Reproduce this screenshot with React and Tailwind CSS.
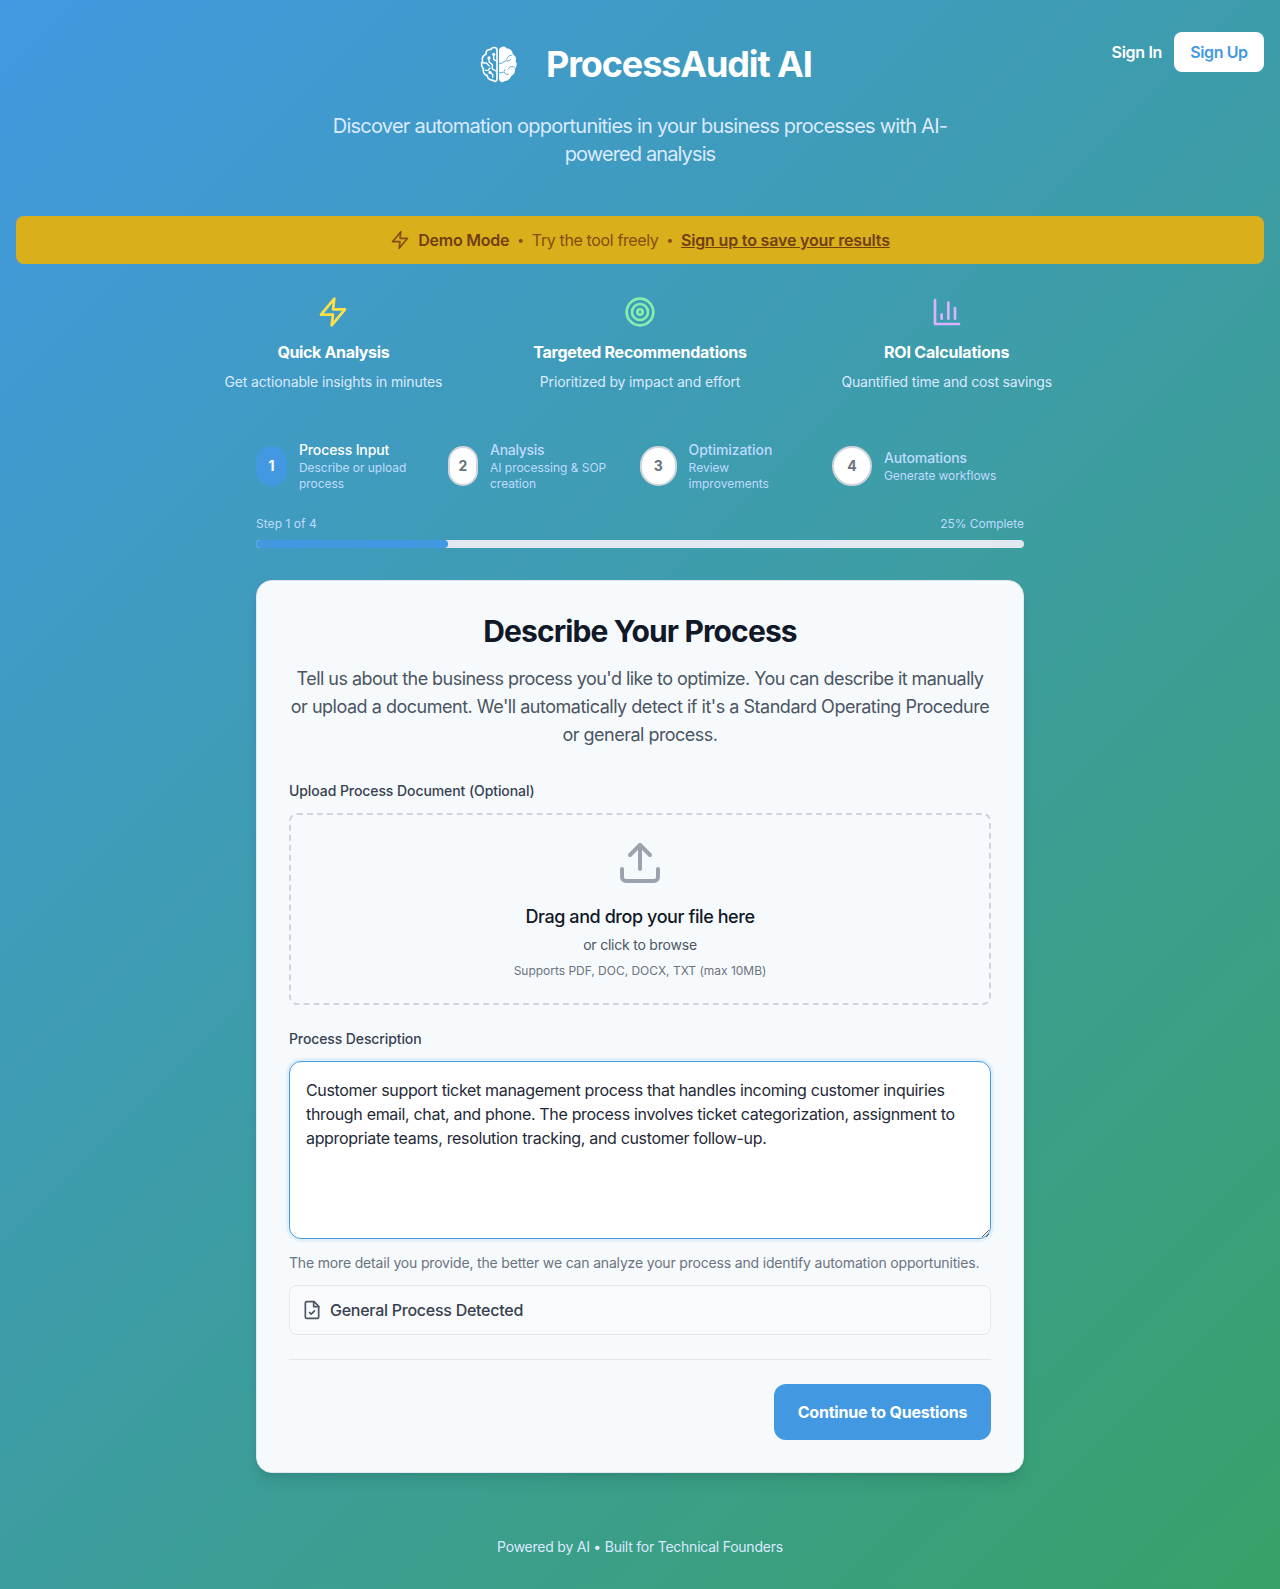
const features = [
  { title: "Quick Analysis", desc: "Get actionable insights in minutes", icon: "zap", color: "text-[#fde047]", ts: "tracking-[-0.35px]", ds: "tracking-[-0.135px]" },
  { title: "Targeted Recommendations", desc: "Prioritized by impact and effort", icon: "target", color: "text-[#86efac]", ts: "tracking-[-0.26px]", ds: "tracking-[-0.135px]" },
  { title: "ROI Calculations", desc: "Quantified time and cost savings", icon: "chart", color: "text-[#d8b4fe]", ts: "tracking-[-0.2px]", ds: "tracking-[-0.175px]" },
];

const steps = [
  { n: 1, label: "Process Input", lines: ["Describe or upload", "process"], w: "w-[31px]", active: true, ls: "tracking-[-0.13px]", ds: "tracking-[-0.04px]" },
  { n: 2, label: "Analysis", lines: ["AI processing & SOP", "creation"], w: "w-[30px]", ls: "tracking-[-0.3px]", ds: "tracking-[-0.02px]" },
  { n: 3, label: "Optimization", lines: ["Review", "improvements"], w: "w-[36.6px]", ls: "tracking-[-0.08px]", ds: "tracking-[0px]" },
  { n: 4, label: "Automations", lines: ["Generate workflows"], w: "w-10", ls: "tracking-[-0.14px]", ds: "tracking-[-0.1px]" },
];

function Icon({ name, className }) {
  const shapes = {
    zap: <polygon points="13 2 3 14 12 14 11 22 21 10 12 10 13 2" />,
    target: (
      <>
        <circle cx="12" cy="12" r="10" />
        <circle cx="12" cy="12" r="6" />
        <circle cx="12" cy="12" r="2" />
      </>
    ),
    chart: (
      <>
        <path d="M3 3v18h18" />
        <path d="M18 17V9" />
        <path d="M13 17V5" />
        <path d="M8 17v-3" />
      </>
    ),
    upload: (
      <>
        <path d="M21 15v4a2 2 0 0 1-2 2H5a2 2 0 0 1-2-2v-4" />
        <polyline points="17 8 12 3 7 8" />
        <line x1="12" x2="12" y1="3" y2="15" />
      </>
    ),
    file: (
      <>
        <path d="M14.5 2H6a2 2 0 0 0-2 2v16a2 2 0 0 0 2 2h12a2 2 0 0 0 2-2V7.5L14.5 2z" />
        <polyline points="14 2 14 8 20 8" />
        <path d="m9 15 2 2 4-4" />
      </>
    ),
  };
  return (
    <svg viewBox="0 0 24 24" fill="none" stroke="currentColor" strokeWidth="2" strokeLinecap="round" strokeLinejoin="round" className={className}>
      {shapes[name]}
    </svg>
  );
}

function BrainLogo() {
  return (
    <svg viewBox="21 6 192 192" className="mr-4 h-16 w-16" fill="none" strokeLinecap="round" strokeLinejoin="round">
      <path
        d="M111 60C111 51 97 50 93 58C83 57 76 64 78 73C69 76 64 85 68 93C63 99 64 111 70 116C68 126 73 134 81 136C83 146 91 152 98 150C104 157 111 154 111 146Z"
        stroke="#fff"
        strokeWidth="5"
      />
      <g stroke="#fff" strokeWidth="4.2">
        <path d="M101 74V88L109 93" />
        <path d="M87 85V96L97 104V117L108 123" />
        <path d="M70 99H79L87 107" />
        <path d="M75 121H84L90 114" />
        <path d="M90 128L98 133V142" />
      </g>
      <g fill="#fff">
        <circle cx="101" cy="73" r="4.8" />
        <circle cx="87" cy="84" r="5" />
        <circle cx="90" cy="127" r="4.8" />
      </g>
      <path
        d="M119 58C121 50 136 48 140 57C150 56 158 64 156 73C165 76 169 85 165 93C171 100 169 112 163 117C165 127 160 135 152 137C150 147 142 152 135 151C129 158 120 156 119 149Z"
        fill="#fff"
        stroke="#fff"
        strokeWidth="3"
      />
      <g stroke="#419bc5" strokeWidth="2.6">
        <path d="M154 76C147 76 142 80 141 87" />
        <path d="M119 101C130 101 134 90 144 92C148 93 150 91 152 88" />
        <path d="M163 112C156 106 147 110 145 117" />
        <path d="M119 128C127 130 134 127 135 119" />
        <path d="M133 127C136 132 140 134 145 133" />
      </g>
    </svg>
  );
}

export default function App() {
  return (
    <div className="relative min-h-[1589px] w-full bg-[linear-gradient(135deg,#4299e1_0%,#38a169_100%)] px-4 py-8 font-[Inter,sans-serif]">
      <div className="absolute top-8 right-4 flex items-center">
        <button className="mr-3 text-base leading-6 font-[560] tracking-[-0.32px] whitespace-nowrap text-white">Sign In</button>
        <button className="h-10 w-[90px] rounded-lg bg-white text-base font-[560] tracking-[-0.4px] whitespace-nowrap text-[#4299e1]">Sign Up</button>
      </div>

      <header className="text-center">
        <div className="flex items-center justify-center">
          <BrainLogo />
          <h1 className="-ml-px w-[267px] text-left text-4xl font-[730] tracking-[-1.13px] whitespace-nowrap text-white">ProcessAudit AI</h1>
        </div>
        <p className="mt-4 text-xl leading-7 whitespace-nowrap text-[#dbeafe]">
          <span className="tracking-[-0.761px]">Discover automation opportunities in your business processes with AI-</span>
          <br />
          <span className="tracking-[-0.88px]">powered analysis</span>
        </p>
      </header>

      <div className="mt-12 flex h-12 items-center justify-center gap-2 rounded-lg bg-[#d9af1b] text-base whitespace-nowrap text-[#854d0e]">
        <Icon name="zap" className="h-5 w-5" />
        <span className="font-[630] tracking-[-0.22px] text-[#713f12]">Demo Mode</span>
        <span className="w-[6.5px] text-center text-[12px]">•</span>
        <span className="tracking-[-0.37px]">Try the tool freely</span>
        <span className="w-[6.5px] text-center text-[12px]">•</span>
        <a className="font-[630] tracking-[-0.17px] text-[#713f12] underline">Sign up to save your results</a>
      </div>

      <section className="mx-auto mt-8 grid max-w-4xl grid-cols-3 gap-6 text-center">
        {features.map((f) => (
          <div key={f.title} className="flex flex-col items-center whitespace-nowrap">
            <Icon name={f.icon} className={`h-8 w-8 ${f.color}`} />
            <h3 className={`mt-3 text-base font-[660] text-white ${f.ts}`}>{f.title}</h3>
            <p className={`mt-2 text-sm text-[#dbeafe] ${f.ds}`}>{f.desc}</p>
          </div>
        ))}
      </section>

      <main className="mx-auto mt-12 max-w-3xl">
        <div className="grid grid-cols-4">
          {steps.map((s) => (
            <div key={s.n} className="flex h-[52px] items-center">
              <div
                className={`flex h-10 shrink-0 items-center justify-center rounded-[20px] border-2 text-sm font-[660] ${s.w} ${
                  s.active ? "border-[#4299e1] bg-[#4299e1] text-white" : "border-[#d1d5db] bg-white text-[#6b7280]"
                }`}
              >
                {s.n}
              </div>
              <div className="ml-3 whitespace-nowrap">
                <div className={`text-sm font-[550] ${s.ls} ${s.active ? "text-white" : "text-[#bfdbfe]"}`}>{s.label}</div>
                {s.lines.map((l) => (
                  <div key={l} className={`text-xs text-[#bfdbfe] ${s.ds}`}>{l}</div>
                ))}
              </div>
            </div>
          ))}
        </div>

        <div className="mt-6 flex justify-between text-xs text-[#bfdbfe]">
          <span className="tracking-[0.05px]">Step 1 of 4</span>
          <span className="tracking-[-0.05px]">25% Complete</span>
        </div>
        <div className="mt-2 h-2 overflow-hidden rounded bg-[#e2e8f0]">
          <div className="h-2 w-1/4 rounded bg-[#4299e1]" />
        </div>

        <div className="mt-8 rounded-2xl border border-[#e2e8f0] bg-[#f7fafc] p-8 shadow-[0_10px_15px_-3px_rgba(0,0,0,0.1),0_4px_6px_-2px_rgba(0,0,0,0.05)]">
          <div className="text-center whitespace-nowrap">
            <h2 className="text-3xl leading-9 font-[720] tracking-[-0.88px] text-[#111827]">Describe Your Process</h2>
            <p className="mt-4 text-lg leading-7 text-[#4b5563]">
              <span className="tracking-[-0.54px]">Tell us about the business process you'd like to optimize. You can describe it manually</span>
              <br />
              <span className="tracking-[-0.484px]">or upload a document. We'll automatically detect if it's a Standard Operating Procedure</span>
              <br />
              <span className="tracking-[-0.52px]">or general process.</span>
            </p>
          </div>

          <div className="mt-8 text-sm font-medium tracking-[-0.08px] text-[#374151]">Upload Process Document (Optional)</div>
          <div className="mt-3 flex flex-col items-center rounded-lg border-2 border-dashed border-[#d1d5db] p-6">
            <Icon name="upload" className="h-12 w-12 text-[#9ca3af]" />
            <div className="mt-4 text-lg leading-7 font-medium tracking-[-0.42px] text-[#111827]">Drag and drop your file here</div>
            <div className="mt-1 text-sm tracking-[-0.216px] text-[#4b5563]">or click to browse</div>
            <div className="mt-2 text-xs tracking-[-0.015px] text-[#6b7280]">Supports PDF, DOC, DOCX, TXT (max 10MB)</div>
          </div>

          <div className="mt-6 text-sm font-medium tracking-[-0.11px] text-[#374151]">Process Description</div>
          <textarea
            rows={6}
            wrap="off"
            className="mt-3 block h-[178px] w-full resize-y overflow-hidden rounded-xl border border-[#4299e1] bg-white p-4 text-base leading-6 tracking-[-0.329px] text-[#1f2937] shadow-[0_0_0_3px_rgba(66,153,225,0.1)] outline-none"
            defaultValue={
              "Customer support ticket management process that handles incoming customer inquiries\nthrough email, chat, and phone. The process involves ticket categorization, assignment to\nappropriate teams, resolution tracking, and customer follow-up."
            }
          />
          <p className="mt-[14px] text-sm tracking-[-0.174px] whitespace-nowrap text-[#6b7280]">
            The more detail you provide, the better we can analyze your process and identify automation opportunities.
          </p>
          <div className="mt-3 flex h-[50px] items-center gap-2 rounded-lg border border-[#e5e7eb] bg-[#f9fafb] px-3">
            <Icon name="file" className="h-5 w-5 text-[#4b5563]" />
            <span className="text-base font-[530] tracking-[-0.26px] text-[#374151]">General Process Detected</span>
          </div>

          <div className="mt-6 flex justify-end border-t border-[#e5e7eb] pt-6">
            <button className="h-14 w-[217px] rounded-xl bg-[#4299e1] text-base font-[660] tracking-[-0.22px] whitespace-nowrap text-white">
              Continue to Questions
            </button>
          </div>
        </div>
      </main>

      <footer className="mt-16 text-center text-sm tracking-[-0.235px] text-[#dbeafe]">Powered by AI • Built for Technical Founders</footer>
    </div>
  );
}
